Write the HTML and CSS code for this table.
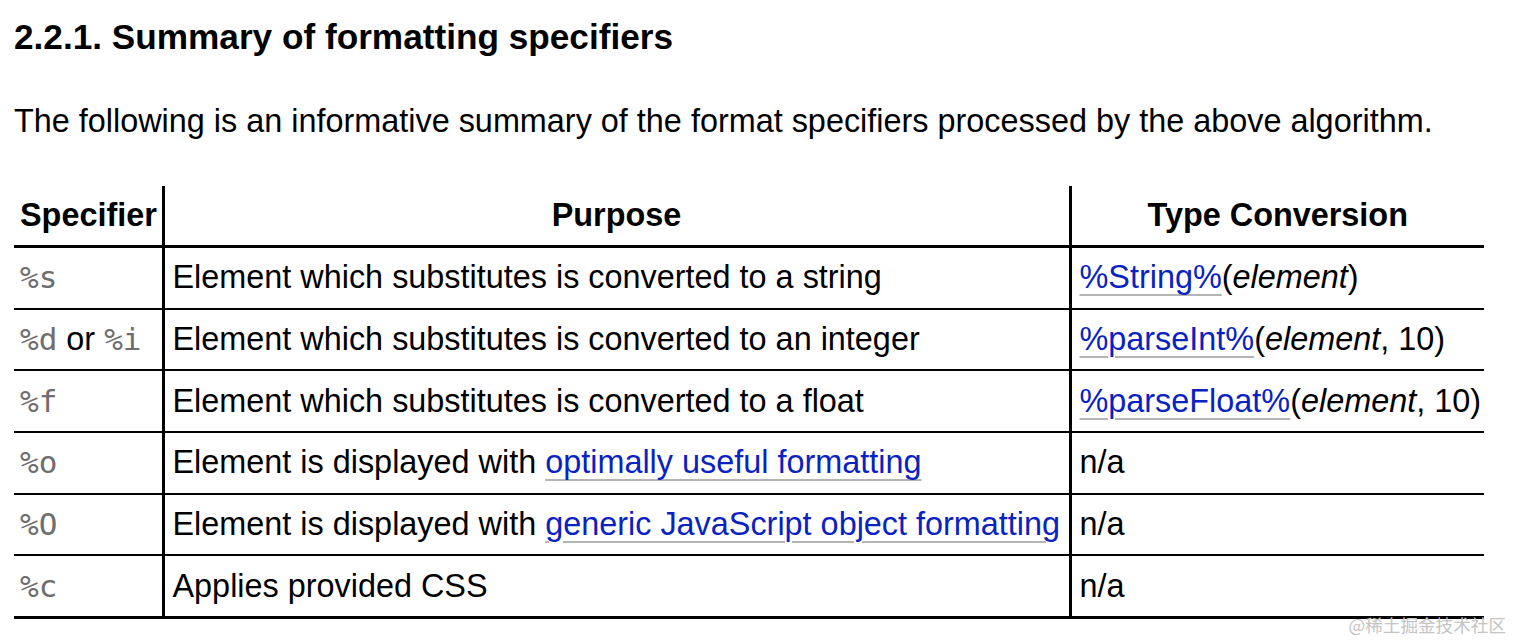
FILE: index.html
```html
<!DOCTYPE html>
<html>
<head>
<meta charset="utf-8">
<link rel="stylesheet" href="styles.css">
</head>
<body>
<h4 class="heading">2.2.1. Summary of formatting specifiers</h4>
<p class="intro">The following is an informative summary of the format specifiers processed by the above algorithm.</p>
<table class="spec">
  <colgroup><col class="c1"><col class="c2"><col class="c3"></colgroup>
  <thead>
    <tr><th class="left">Specifier</th><th>Purpose</th><th>Type Conversion</th></tr>
  </thead>
  <tbody>
    <tr><td><code>%s</code></td><td>Element which substitutes is converted to a string</td><td><a href="#">%String%</a>(<i>element</i>)</td></tr>
    <tr><td><code>%d</code> or <code>%i</code></td><td>Element which substitutes is converted to an integer</td><td><a href="#">%parseInt%</a>(<i>element</i>, 10)</td></tr>
    <tr><td><code>%f</code></td><td>Element which substitutes is converted to a float</td><td><a href="#">%parseFloat%</a>(<i>element</i>, 10)</td></tr>
    <tr><td><code>%o</code></td><td>Element is displayed with <a href="#">optimally useful formatting</a></td><td>n/a</td></tr>
    <tr><td><code>%O</code></td><td>Element is displayed with <a href="#">generic JavaScript object formatting</a></td><td>n/a</td></tr>
    <tr><td><code>%c</code></td><td>Applies provided CSS</td><td>n/a</td></tr>
  </tbody>
</table>
<div class="watermark">@稀土掘金技术社区</div>
</body>
</html>
```
FILE: styles.css
```css
html, body {
  margin: 0;
  padding: 0;
  background: #fff;
}
body {
  font-family: "Liberation Sans", Arial, sans-serif;
  color: #000;
  padding: 0 14px;
  position: relative;
  height: 642px;
  overflow: hidden;
}
.heading {
  margin: 0;
  padding-top: 17px;
  font-size: 35.2px;
  font-weight: bold;
  line-height: 40px;
}
.intro {
  margin: 44px 0 0 0;
  font-size: 32.4px;
  line-height: 40px;
}
.spec {
  margin-top: 45px;
  border-collapse: collapse;
  table-layout: fixed;
  width: 1470px;
  font-size: 32.4px;
}
.c1 { width: 149px; }
.c2 { width: 907px; }
.c3 { width: 414px; }
.spec th {
  font-weight: bold;
  text-align: center;
  height: 59px;
  padding: 0 6px;
  border-bottom: 3px solid #000;
}
.spec th.left { text-align: left; padding-left: 6px; }
.spec th + th, .spec td + td {
  border-left: 3px solid #000;
}
.spec td {
  height: 59.7px;
  padding: 0 6px 0 8px;
  border-bottom: 2px solid #000;
  white-space: nowrap;
  vertical-align: middle;
}
.spec td:first-child { padding-left: 6px; }
.spec tbody tr:last-child td { border-bottom: 3px solid #000; }
.spec code {
  font-family: "DejaVu Sans Mono", "Liberation Mono", monospace;
  font-size: 31px;
  color: #6e6e6e;
}
.spec a {
  color: #0a22c0;
  text-decoration: underline;
  text-decoration-color: #b4b4b4;
  text-decoration-thickness: 2px;
  text-underline-offset: 6px;
}
.watermark {
  position: absolute;
  right: 8px;
  bottom: 5px;
  font-family: "Noto Sans CJK SC", sans-serif;
  font-size: 17.6px;
  color: #c4c4c4;
}
```
